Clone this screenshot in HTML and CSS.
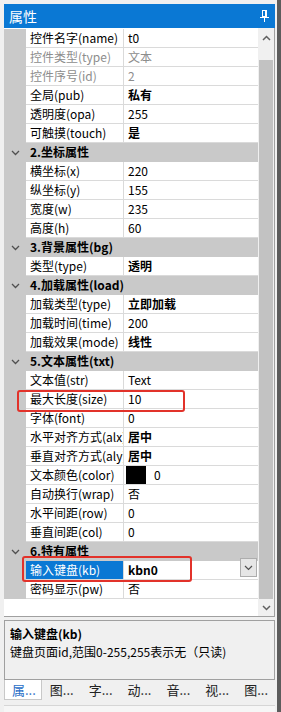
FILE: index.html
```html
<!DOCTYPE html>
<html lang="zh-CN">
<head>
  <meta charset="UTF-8">
  <title>属性</title>
  <link rel="stylesheet" href="styles.css">
</head>
<body>

<div class="window">
  <div class="title">
    <span>属性</span>
    <svg class="pin" width="9" height="12" viewBox="0 0 9 12">
      <rect x="2.5" y="0.5" width="4" height="6" fill="none" stroke="#fff"/>
      <line x1="5.5" y1="1" x2="5.5" y2="6" stroke="#fff"/>
      <line x1="0" y1="7.5" x2="9" y2="7.5" stroke="#fff"/>
      <line x1="4.5" y1="8" x2="4.5" y2="12" stroke="#fff"/>
    </svg>
  </div>

  <div class="grid">
    <div class="rows">
      <div class="row"><div class="gut"></div><div class="name">控件名字(name)</div><div class="val">t0</div></div>
      <div class="row off"><div class="gut"></div><div class="name">控件类型(type)</div><div class="val">文本</div></div>
      <div class="row off"><div class="gut"></div><div class="name">控件序号(id)</div><div class="val">2</div></div>
      <div class="row"><div class="gut"></div><div class="name">全局(pub)</div><div class="val b">私有</div></div>
      <div class="row"><div class="gut"></div><div class="name">透明度(opa)</div><div class="val">255</div></div>
      <div class="row"><div class="gut"></div><div class="name">可触摸(touch)</div><div class="val b">是</div></div>

      <div class="row sec"><div class="gut"><svg width="9" height="6" viewBox="0 0 9 6"><polyline points="1,1 4.5,4.5 8,1" fill="none" stroke="#505050" stroke-width="1.3"/></svg></div><div class="sec-name">2.坐标属性</div></div>
      <div class="row"><div class="gut"></div><div class="name">横坐标(x)</div><div class="val">220</div></div>
      <div class="row"><div class="gut"></div><div class="name">纵坐标(y)</div><div class="val">155</div></div>
      <div class="row"><div class="gut"></div><div class="name">宽度(w)</div><div class="val">235</div></div>
      <div class="row"><div class="gut"></div><div class="name">高度(h)</div><div class="val">60</div></div>

      <div class="row sec"><div class="gut"><svg width="9" height="6" viewBox="0 0 9 6"><polyline points="1,1 4.5,4.5 8,1" fill="none" stroke="#505050" stroke-width="1.3"/></svg></div><div class="sec-name">3.背景属性(bg)</div></div>
      <div class="row"><div class="gut"></div><div class="name">类型(type)</div><div class="val b">透明</div></div>

      <div class="row sec"><div class="gut"><svg width="9" height="6" viewBox="0 0 9 6"><polyline points="1,1 4.5,4.5 8,1" fill="none" stroke="#505050" stroke-width="1.3"/></svg></div><div class="sec-name">4.加载属性(load)</div></div>
      <div class="row"><div class="gut"></div><div class="name">加载类型(type)</div><div class="val b">立即加载</div></div>
      <div class="row"><div class="gut"></div><div class="name">加载时间(time)</div><div class="val">200</div></div>
      <div class="row"><div class="gut"></div><div class="name">加载效果(mode)</div><div class="val b">线性</div></div>

      <div class="row sec"><div class="gut"><svg width="9" height="6" viewBox="0 0 9 6"><polyline points="1,1 4.5,4.5 8,1" fill="none" stroke="#505050" stroke-width="1.3"/></svg></div><div class="sec-name">5.文本属性(txt)</div></div>
      <div class="row"><div class="gut"></div><div class="name">文本值(str)</div><div class="val">Text</div></div>
      <div class="row"><div class="gut"></div><div class="name">最大长度(size)</div><div class="val">10</div></div>
      <div class="row"><div class="gut"></div><div class="name">字体(font)</div><div class="val">0</div></div>
      <div class="row"><div class="gut"></div><div class="name">水平对齐方式(alx)</div><div class="val b">居中</div></div>
      <div class="row"><div class="gut"></div><div class="name">垂直对齐方式(aly)</div><div class="val b">居中</div></div>
      <div class="row"><div class="gut"></div><div class="name">文本颜色(color)</div><div class="val color"><span class="swatch"></span>0</div></div>
      <div class="row"><div class="gut"></div><div class="name">自动换行(wrap)</div><div class="val">否</div></div>
      <div class="row"><div class="gut"></div><div class="name">水平间距(row)</div><div class="val">0</div></div>
      <div class="row"><div class="gut"></div><div class="name">垂直间距(col)</div><div class="val">0</div></div>

      <div class="row sec"><div class="gut"><svg width="9" height="6" viewBox="0 0 9 6"><polyline points="1,1 4.5,4.5 8,1" fill="none" stroke="#505050" stroke-width="1.3"/></svg></div><div class="sec-name">6.特有属性</div></div>
      <div class="row sel"><div class="gut"></div><div class="name">输入键盘(kb)</div><div class="val b drop">kbn0<span class="drop-btn"><svg width="9" height="6" viewBox="0 0 9 6"><polyline points="1,1 4.5,4.5 8,1" fill="none" stroke="#505050" stroke-width="1.2"/></svg></span></div></div>
      <div class="row"><div class="gut"></div><div class="name">密码显示(pw)</div><div class="val">否</div></div>
    </div>

    <div class="sb">
      <div class="sb-btn"><svg width="9" height="6" viewBox="0 0 9 6"><polyline points="1,5 4.5,1.5 8,5" fill="none" stroke="#606060" stroke-width="1.5"/></svg></div>
      <div class="sb-track"></div>
      <div class="sb-thumb"></div>
      <div class="sb-btn sb-down"><svg width="9" height="6" viewBox="0 0 9 6"><polyline points="1,1 4.5,4.5 8,1" fill="none" stroke="#606060" stroke-width="1.5"/></svg></div>
    </div>
  </div>

  <div class="desc">
    <div class="desc-title">输入键盘(kb)</div>
    <div>键盘页面id,范围0-255,255表示无（只读)</div>
  </div>

  <div class="tabs">
    <div class="tab active">属...</div>
    <div class="tab">图...</div>
    <div class="tab">字...</div>
    <div class="tab">动...</div>
    <div class="tab">音...</div>
    <div class="tab">视...</div>
    <div class="tab">图...</div>
  </div>
  <div class="bottom"></div>
</div>
<div class="edge"></div>

<!-- red marks drawn over the grid -->
<div class="mark mark-size"></div>
<div class="mark mark-kb"></div>

</body>
</html>
```

FILE: styles.css
```css
body {
  margin: 0;
  width: 281px;
  height: 712px;
  overflow: hidden;
  display: flex;
  position: relative;
  background: #f0f0f0;
  font-family: "Noto Sans CJK SC", "Microsoft YaHei", sans-serif;
  font-size: 12px;
  color: #000;
}

.window {
  width: 277px;
  padding: 4px 2px 0 4px;
  box-sizing: border-box;
  display: flex;
  flex-direction: column;
}

.edge {
  width: 4px;
  background: #5c5c5c;
}

.title {
  height: 24px;
  background: #0a78d4;
  color: #fff;
  font-size: 14px;
  display: flex;
  align-items: center;
  justify-content: space-between;
  padding: 0 6px 0 5px;
}

.grid {
  display: flex;
  height: 589px;
  box-sizing: border-box;
  background: #fff;
  border-right: 1px solid #a0a0a0;
  border-bottom: 1px solid #a0a0a0;
}

.rows {
  width: 254px;
  padding-top: 1px;
}

.row {
  display: flex;
  height: 19px;
  line-height: 18px;
}

.gut {
  width: 22px;
  flex: none;
  background: #c9c9c9;
  display: flex;
  align-items: center;
  justify-content: center;
}

.name {
  width: 98px;
  flex: none;
  box-sizing: border-box;
  padding-left: 4px;
  border-right: 1px solid #dadada;
  border-bottom: 1px solid #dadada;
  white-space: nowrap;
  overflow: hidden;
}

.val {
  flex: 1;
  padding-left: 4px;
  border-bottom: 1px solid #dadada;
  white-space: nowrap;
}

.b {
  font-weight: bold;
}

.off .name,
.off .val {
  color: #8d8d8d;
}

.sec {
  background: #c9c9c9;
}

.sec-name {
  padding-left: 4px;
  font-weight: bold;
}

.sel .name {
  background: #0a78d4;
  color: #fff;
}

.drop {
  display: flex;
  justify-content: space-between;
  padding-right: 1px;
}

.drop-btn {
  width: 15px;
  height: 17px;
  margin-top: -3px;
  background: #e6e6e6;
  border: 1px solid #adadad;
  display: flex;
  align-items: center;
  justify-content: center;
}

.color {
  display: flex;
  align-items: center;
}

.swatch {
  width: 20px;
  height: 18px;
  background: #000;
  margin: 0 8px 0 -2px;
}

.sb {
  width: 16px;
  background: #f0f0f0;
  display: flex;
  flex-direction: column;
}

.sb-btn {
  height: 19px;
  display: flex;
  align-items: center;
  justify-content: center;
}

.sb-track {
  height: 13px;
}

.sb-thumb {
  height: 539px;
  margin: 0 1px;
  background: #c2c2c2;
}

.sb-down {
  flex: 1;
  height: auto;
}

.desc {
  margin-top: 3px;
  height: 60px;
  box-sizing: border-box;
  border: 1px solid #a0a0a0;
  padding: 4px 5px;
  line-height: 18px;
}

.desc-title {
  font-weight: bold;
}

.tabs {
  display: flex;
  height: 20px;
  line-height: 19px;
  font-size: 13px;
  color: #222;
}

.tab {
  width: 39px;
  box-sizing: border-box;
  padding-left: 8px;
}

.tab.active {
  width: 38px;
  padding-left: 7px;
  background: #fff;
  color: #2b6fc7;
  border: 1px solid #c8c8c8;
  border-top: none;
}

.bottom {
  margin-top: 5px;
  border-top: 1px solid #d6d6d6;
  flex: 1;
  background: #f6f6f6;
}

.mark {
  position: absolute;
  border: 2px solid #e2322a;
  border-radius: 3px;
  box-sizing: border-box;
}

.mark-size {
  left: 17px;
  top: 390px;
  width: 168px;
  height: 22px;
}

.mark-kb {
  left: 22px;
  top: 556px;
  width: 170px;
  height: 26px;
}
```
